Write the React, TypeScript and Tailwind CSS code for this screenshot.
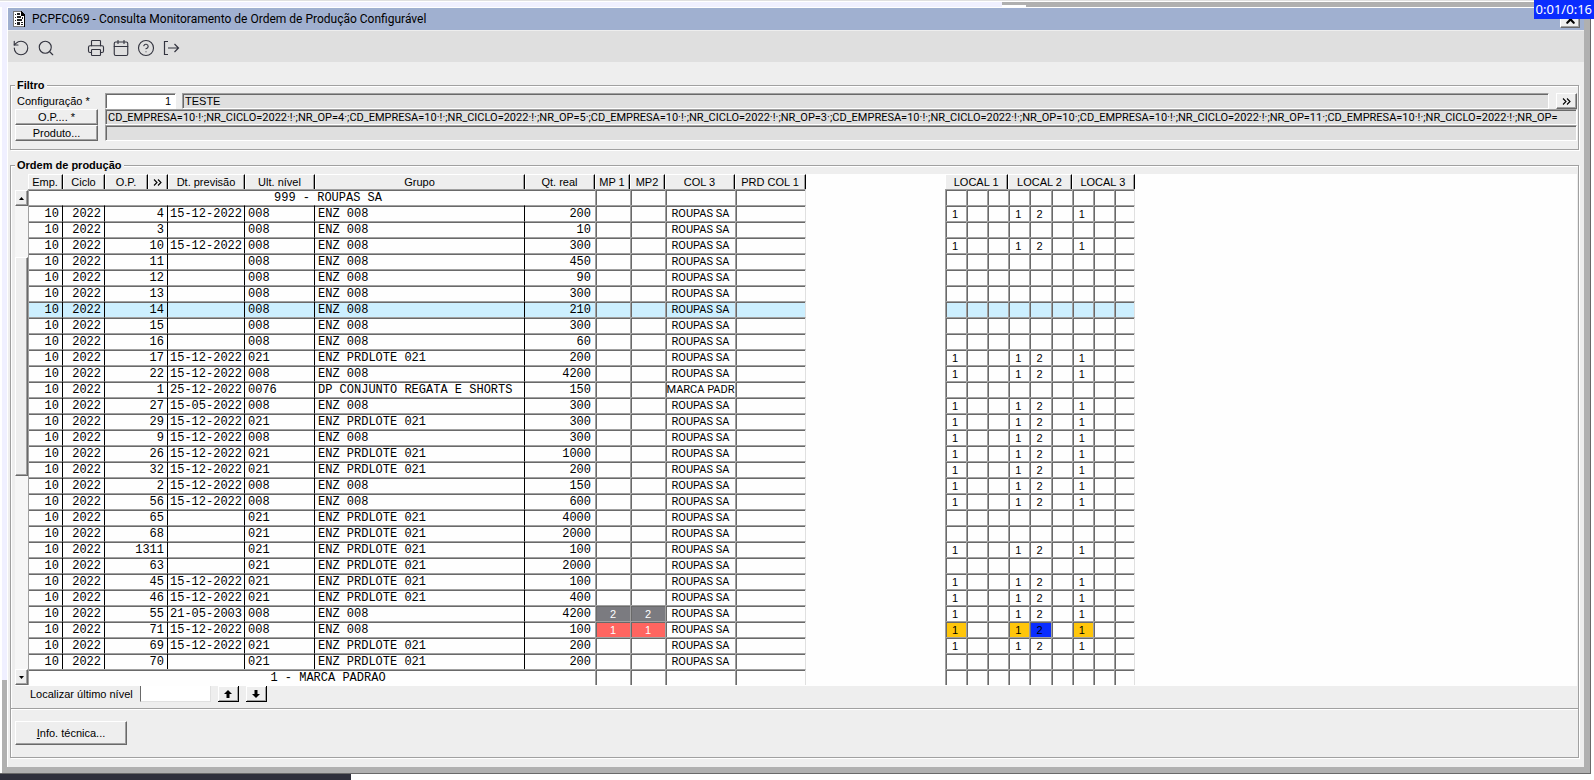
import type { ReactNode } from "react";
import { Calendar, CircleHelp, Printer, RotateCcw, Search, X } from "lucide-react";
import clsx from "clsx";

type Order = {
  op: string;
  date: string;
  level: string;
  group: string;
  qty: string;
  steps?: boolean;
  brand?: string;
  mp?: string;
  mpColor?: string;
  active?: boolean;
  late?: boolean;
};

const D = "15-12-2022";
const ENZ = "ENZ 008";
const LOTE = "ENZ PRDLOTE 021";

const orders: Order[] = [
  { op: "4", date: D, level: "008", group: ENZ, qty: "200", steps: true },
  { op: "3", date: "", level: "008", group: ENZ, qty: "10" },
  { op: "10", date: D, level: "008", group: ENZ, qty: "300", steps: true },
  { op: "11", date: "", level: "008", group: ENZ, qty: "450" },
  { op: "12", date: "", level: "008", group: ENZ, qty: "90" },
  { op: "13", date: "", level: "008", group: ENZ, qty: "300" },
  { op: "14", date: "", level: "008", group: ENZ, qty: "210", active: true },
  { op: "15", date: "", level: "008", group: ENZ, qty: "300" },
  { op: "16", date: "", level: "008", group: ENZ, qty: "60" },
  { op: "17", date: D, level: "021", group: LOTE, qty: "200", steps: true },
  { op: "22", date: D, level: "008", group: ENZ, qty: "4200", steps: true },
  { op: "1", date: "25-12-2022", level: "0076", group: "DP CONJUNTO REGATA E SHORTS", qty: "150", brand: "MARCA PADR" },
  { op: "27", date: "15-05-2022", level: "008", group: ENZ, qty: "300", steps: true },
  { op: "29", date: D, level: "021", group: LOTE, qty: "300", steps: true },
  { op: "9", date: D, level: "008", group: ENZ, qty: "300", steps: true },
  { op: "26", date: D, level: "021", group: LOTE, qty: "1000", steps: true },
  { op: "32", date: D, level: "021", group: LOTE, qty: "200", steps: true },
  { op: "2", date: D, level: "008", group: ENZ, qty: "150", steps: true },
  { op: "56", date: D, level: "008", group: ENZ, qty: "600", steps: true },
  { op: "65", date: "", level: "021", group: LOTE, qty: "4000" },
  { op: "68", date: "", level: "021", group: LOTE, qty: "2000" },
  { op: "1311", date: "", level: "021", group: LOTE, qty: "100", steps: true },
  { op: "63", date: "", level: "021", group: LOTE, qty: "2000" },
  { op: "45", date: D, level: "021", group: LOTE, qty: "100", steps: true },
  { op: "46", date: D, level: "021", group: LOTE, qty: "400", steps: true },
  { op: "55", date: "21-05-2003", level: "008", group: ENZ, qty: "4200", steps: true, mp: "2", mpColor: "bg-[#7b7b80] text-white" },
  { op: "71", date: D, level: "008", group: ENZ, qty: "100", steps: true, mp: "1", mpColor: "bg-[#ff6560] text-white", late: true },
  { op: "69", date: D, level: "021", group: LOTE, qty: "200", steps: true },
  { op: "70", date: "", level: "021", group: LOTE, qty: "200" },
];

const opFilter =
  ["4", "5", "3", "10", "11"].map((n) => `CD_EMPRESA=10·!·;NR_CICLO=2022·!·;NR_OP=${n}·;`).join("") +
  "CD_EMPRESA=10·!·;NR_CICLO=2022·!·;NR_OP=";

const raised =
  "border border-t-white border-l-white border-r-[#696969] border-b-[#696969] bg-[#eee] shadow-[inset_-1px_-1px_0_#a0a0a0]";
const raisedBlack =
  "flex h-4 w-[21px] items-center justify-center border-b border-r border-black bg-[#eee] shadow-[inset_1px_1px_0_#fff,inset_-1px_-1px_0_#a0a0a0]";
const sunken =
  "min-w-0 border border-t-[#a0a0a0] border-l-[#a0a0a0] border-r-white border-b-white pt-px shadow-[inset_1px_1px_0_#696969] outline-none";
const panel = "border border-[#a0a0a0] shadow-[1px_1px_0_#fff,inset_1px_1px_0_#fff]";
const th =
  "h-[15px] overflow-hidden border-r border-r-black border-t border-t-white bg-[#eee] p-0 text-center font-normal leading-[14px] whitespace-nowrap shadow-[inset_1px_0_0_#fff,inset_-1px_0_0_#a0a0a0]";
const td =
  "h-4 overflow-hidden border-t border-t-[#a0a0a0] p-0 pt-[2px] font-['Liberation_Mono',monospace] text-[12px] leading-[13px] whitespace-nowrap shadow-[inset_0_1px_0_#696969]";
const ruled = "border-r border-r-black";
const box =
  "h-4 overflow-hidden border-t border-l border-[#a0a0a0] p-0 text-center leading-[14px] whitespace-nowrap shadow-[inset_1px_1px_0_#696969]";

function ToolButton({ label, children }: { label: string; children: ReactNode }) {
  return (
    <button type="button" aria-label={label} className="flex h-[18px] w-[25px] items-center justify-center text-[#33343f]">
      {children}
    </button>
  );
}

function GroupRow({ title }: { title: string }) {
  return (
    <tr>
      <td colSpan={8} className={clsx(td, "border-l border-l-[#a0a0a0] pl-8 text-center")}>
        {title}
      </td>
      <td className={box} />
      <td className={box} />
      <td className={box} />
      <td className={clsx(box, "border-r border-r-[#e0e0e0]")} />
    </tr>
  );
}

function OrdersTable() {
  return (
    <table className="w-[778px] shrink-0 table-fixed border-separate border-spacing-0">
      <colgroup>
        <col className="w-[35px]" />
        <col className="w-[42px]" />
        <col className="w-[43px]" />
        <col className="w-[20px]" />
        <col className="w-[77px]" />
        <col className="w-[70px]" />
        <col className="w-[210px]" />
        <col className="w-[70px]" />
        <col className="w-[35px]" />
        <col className="w-[35px]" />
        <col className="w-[70px]" />
        <col className="w-[71px]" />
      </colgroup>
      <thead>
        <tr>
          <th className={th}>Emp.</th>
          <th className={th}>Ciclo</th>
          <th className={th}>O.P.</th>
          <th className={th}>
            <button type="button" aria-label="Expandir" className="block w-full">
              <Chevrons />
            </button>
          </th>
          <th className={th}>Dt. previsão</th>
          <th className={th}>Ult. nível</th>
          <th className={th}>Grupo</th>
          <th className={th}>Qt. real</th>
          <th className={th}>MP 1</th>
          <th className={th}>MP2</th>
          <th className={th}>COL 3</th>
          <th className={th}>PRD COL 1</th>
        </tr>
      </thead>
      <tbody>
        <GroupRow title="999 - ROUPAS SA" />
        {orders.map((o) => (
          <tr key={o.op} className={o.active ? "bg-[#ccefff]" : ""}>
            <td className={clsx(td, ruled, "border-l border-l-[#a0a0a0] pr-[3px] text-right")}>10</td>
            <td className={clsx(td, ruled, "pr-[3px] text-right")}>2022</td>
            <td colSpan={2} className={clsx(td, ruled, "pr-[3px] text-right")}>{o.op}</td>
            <td className={clsx(td, ruled, "text-center")}>{o.date}</td>
            <td className={clsx(td, ruled, "pl-[3px]")}>{o.level}</td>
            <td className={clsx(td, ruled, "pl-[3px]")}>{o.group}</td>
            <td className={clsx(td, "pr-[4px] text-right")}>{o.qty}</td>
            <td className={clsx(box, o.mpColor)}>{o.mp}</td>
            <td className={clsx(box, o.mpColor)}>{o.mp}</td>
            <td className={clsx(box, "font-[Roboto,sans-serif]")}>{o.brand ?? "ROUPAS SA"}</td>
            <td className={clsx(box, "border-r border-r-[#e0e0e0]")} />
          </tr>
        ))}
        <GroupRow title="1 - MARCA PADRAO" />
      </tbody>
    </table>
  );
}

const stepValues = ["1", "", "", "1", "2", "", "1", "", ""];

function StepsRow({ order }: { order?: Order }) {
  return (
    <tr className={order?.active ? "bg-[#ccefff]" : ""}>
      {stepValues.map((v, i) => (
        <td
          key={i}
          className={clsx(
            box,
            "pr-[2px]",
            i === 8 && "border-r border-r-[#e0e0e0]",
            order?.late && v === "1" && "bg-[#ffc60b]",
            order?.late && v === "2" && "bg-[#0a2dff]"
          )}
        >
          {order?.steps ? v : ""}
        </td>
      ))}
    </tr>
  );
}

function StepsTable() {
  return (
    <table className="ml-[139px] w-[190px] shrink-0 table-fixed border-separate border-spacing-0">
      <thead>
        <tr>
          <th colSpan={3} className={th}>LOCAL 1</th>
          <th colSpan={3} className={th}>LOCAL 2</th>
          <th colSpan={3} className={th}>LOCAL 3</th>
        </tr>
      </thead>
      <tbody>
        <StepsRow />
        {orders.map((o) => (
          <StepsRow key={o.op} order={o} />
        ))}
        <StepsRow />
      </tbody>
    </table>
  );
}

function Chevrons() {
  return (
    <svg viewBox="0 0 9 7" className="mx-auto block h-[7px] w-[9px]" fill="none" stroke="#000" strokeWidth="1.1">
      <path d="M1 .5 4 3.5 1 6.5M5 .5 8 3.5 5 6.5" />
    </svg>
  );
}

function ScrollBar() {
  return (
    <div className="flex w-[13px] shrink-0 flex-col bg-[#eee] pt-4">
      <button type="button" aria-label="Rolar para cima" className={clsx(raised, "flex h-4 items-center justify-center")}>
        <svg viewBox="0 0 5 3" className="h-[3px] w-[5px]"><path d="M0 3 2.5 0 5 3z" /></svg>
      </button>
      <div className="h-[51px] bg-[#f6f6f6]" />
      <div className={clsx(raised, "h-[219px]")} />
      <div className="flex-1 bg-[#f6f6f6]" />
      <button type="button" aria-label="Rolar para baixo" className={clsx(raised, "flex h-4 items-center justify-center")}>
        <svg viewBox="0 0 5 3" className="h-[3px] w-[5px]"><path d="M0 0 2.5 3 5 0z" /></svg>
      </button>
    </div>
  );
}

function TitleBar() {
  return (
    <header className="flex h-[22px] items-center bg-[#a0b0d0] pl-[5px] pr-1">
      <svg viewBox="0 0 12 16" className="h-4 w-3" shapeRendering="crispEdges">
        <path d="M0 0h8l4 4v12H0z" fill="#fff" />
        <path d="M0 0h8v1H1v14h11v1H0z" fill="#777" />
        <path d="M8 0h1v1h1v1h1v1h1v13h-1V5H8z" fill="#000" />
        <path d="M2 3h1v1H2zM4 2h3v2H4zM2 6h1v1H2zM4 5h4v2H4zM9 6h1v2H9zM2 9h1v1H2zM4 8h5v2H4zM2 12h1v1H2zM4 11h3v3H4zM8 11h2v1H8zM8 13h2v1H8z" fill="#222" />
      </svg>
      <h1 className="ml-[7px] flex-1 font-[Roboto,sans-serif] text-[12px] leading-4">
        PCPFC069 - Consulta Monitoramento de Ordem de Produção Configurável
      </h1>
      <button type="button" aria-label="Fechar" className={clsx(raised, "flex h-[18px] w-5 items-center justify-center")}>
        <X size={13} strokeWidth={4} />
      </button>
    </header>
  );
}

function Toolbar() {
  return (
    <div className="mt-px flex h-[31px] items-center bg-[#dfdfdf] pt-[2px]">
      <ToolButton label="Desfazer"><RotateCcw size={18} strokeWidth={1.5} /></ToolButton>
      <ToolButton label="Consultar"><Search size={18} strokeWidth={1.5} /></ToolButton>
      <div className="w-[25px]" />
      <ToolButton label="Imprimir"><Printer size={18} strokeWidth={1.5} /></ToolButton>
      <ToolButton label="Agenda"><Calendar size={18} strokeWidth={1.5} /></ToolButton>
      <ToolButton label="Ajuda"><CircleHelp size={18} strokeWidth={1.5} /></ToolButton>
      <ToolButton label="Sair">
        <svg viewBox="0 0 18 18" className="h-[18px] w-[18px]" fill="none" stroke="currentColor" strokeWidth="1.2">
          <path d="M6 2.5H2.5v13H6M6 9h10.5M12.5 5l4 4-4 4" />
        </svg>
      </ToolButton>
    </div>
  );
}

function Filters() {
  return (
    <fieldset className={clsx(panel, "mt-4 min-w-0 pb-2 pl-1 pr-px")}>
      <legend className="bg-[#eee] px-[2px] text-[11px] font-bold leading-[14px]">Filtro</legend>
      <div className="grid grid-cols-[83px_minmax(0,1fr)] gap-x-[7px] pt-px">
        <label htmlFor="config" className="pl-[2px] leading-4">Configuração *</label>
        <div className="flex h-4">
          <input id="config" defaultValue="1" className={clsx(sunken, "w-[71px] bg-white pr-1 text-right")} />
          <input aria-label="Descrição" readOnly defaultValue="TESTE" className={clsx(sunken, "ml-[6px] flex-1 bg-[#dfdfdf] pl-[2px]")} />
          <button type="button" aria-label="Mais opções" className={clsx(raised, "ml-[7px] w-[21px]")}>
            <Chevrons />
          </button>
        </div>
        <button type="button" className={clsx(raised, "h-4 leading-[14px]")}>O.P.... *</button>
        <input
          aria-label="O.P."
          readOnly
          defaultValue={opFilter}
          className={clsx(sunken, "h-4 bg-[#dfdfdf] px-[2px] font-[Roboto,sans-serif] leading-[13px]")}
        />
        <button type="button" className={clsx(raised, "h-4 leading-[14px]")}>Produto...</button>
        <input aria-label="Produto" readOnly className={clsx(sunken, "h-4 bg-[#dfdfdf]")} />
      </div>
    </fieldset>
  );
}

function Orders() {
  return (
    <fieldset className={clsx(panel, "mt-2 min-w-0 pb-[6px] pl-1 pr-px")}>
      <legend className="bg-[#eee] px-[2px] text-[11px] font-bold leading-[14px]">Ordem de produção</legend>
      <div className="mt-[2px] flex overflow-hidden bg-[#fefefe] pb-px">
        <ScrollBar />
        <OrdersTable />
        <StepsTable />
      </div>
      <div className="flex h-4 items-center pl-[15px]">
        <label htmlFor="find" className="w-[110px]">Localizar último nível</label>
        <input
          id="find"
          className="h-4 w-[71px] border-b border-l border-r border-b-[#e0e0e0] border-l-[#696969] border-r-[#e0e0e0] bg-white px-1 outline-none"
        />
        <button type="button" aria-label="Anterior" className={clsx(raisedBlack, "ml-[7px]")}>
          <svg viewBox="0 0 8 8" className="h-2 w-2"><path d="M4 0 8 4H5.5v4h-3V4H0z" /></svg>
        </button>
        <button type="button" aria-label="Próximo" className={clsx(raisedBlack, "ml-[7px]")}>
          <svg viewBox="0 0 8 8" className="h-2 w-2"><path d="M4 8 0 4h2.5V0h3v4H8z" /></svg>
        </button>
      </div>
    </fieldset>
  );
}

export default function App() {
  return (
    <div className="relative flex min-h-screen flex-col bg-white font-['Liberation_Sans',Arial,sans-serif] text-[11px] text-black">
      <div className="mr-[3px] flex flex-1 flex-col border-b border-r border-t border-b-[#696969] border-r-[#696969] border-t-[#e0e0e0]">
        <div className="mt-px flex h-[5px]">
          <div className="w-[63%] bg-[#f0f0ff]" />
          <div className="h-[3px] w-6 bg-[#b0b0b0]" />
          <div className="flex-1 bg-[#b0b0b0]" />
        </div>
        <div className="flex flex-1">
          <div className="ml-[2px] flex w-[5px] flex-col">
            <div className="flex-1 bg-[#f0f0ff]" />
            <div className="h-[87px] bg-[#b0b0b0]" />
          </div>
          <main className="flex min-w-0 flex-1 flex-col border-l border-t border-white bg-[#eee]">
            <TitleBar />
            <Toolbar />
            <div className="flex flex-1 flex-col pb-[9px] pl-[2px] pr-[5px]">
              <Filters />
              <Orders />
              <div className={clsx(panel, "flex-1 border-t-0 pl-1 pt-3")}>
                <button type="button" className={clsx(raised, "h-6 w-28")}>
                  <span className="underline">I</span>nfo. técnica...
                </button>
              </div>
            </div>
          </main>
          <div className="w-[6px] bg-[#b0b0b0]" />
        </div>
        <div className="ml-[2px] h-[6px] bg-[#b0b0b0]" />
      </div>
      <div className="h-[6px] w-[22%] bg-[#2f303c]" />
      <div className="absolute right-0 top-0 bg-[#0a2dff] px-[2px] font-['Noto_Sans',sans-serif] text-[13px] leading-[19px] text-white">
        0:01/0:16
      </div>
    </div>
  );
}
